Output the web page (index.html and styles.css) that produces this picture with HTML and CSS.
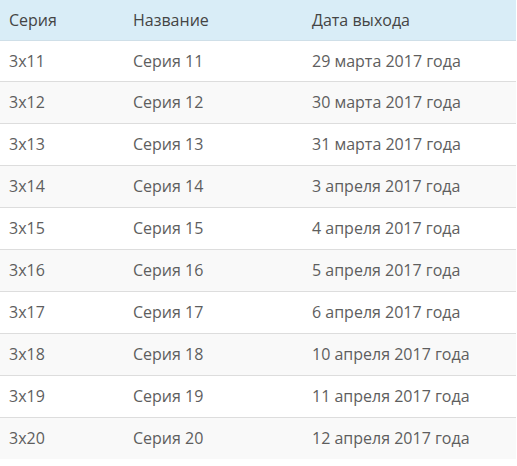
FILE: index.html
```html
<!DOCTYPE html>
<html lang="ru">
<head>
<meta charset="utf-8">
<link rel="stylesheet" href="styles.css">
</head>
<body>
<table class="episodes">
  <colgroup>
    <col class="c1"><col class="c2"><col class="c3">
  </colgroup>
  <thead>
    <tr><th>Серия</th><th>Название</th><th>Дата выхода</th></tr>
  </thead>
  <tbody>
    <tr><td>3x11</td><td>Серия 11</td><td>29 марта 2017 года</td></tr>
    <tr><td>3x12</td><td>Серия 12</td><td>30 марта 2017 года</td></tr>
    <tr><td>3x13</td><td>Серия 13</td><td>31 марта 2017 года</td></tr>
    <tr><td>3x14</td><td>Серия 14</td><td>3 апреля 2017 года</td></tr>
    <tr><td>3x15</td><td>Серия 15</td><td>4 апреля 2017 года</td></tr>
    <tr><td>3x16</td><td>Серия 16</td><td>5 апреля 2017 года</td></tr>
    <tr><td>3x17</td><td>Серия 17</td><td>6 апреля 2017 года</td></tr>
    <tr><td>3x18</td><td>Серия 18</td><td>10 апреля 2017 года</td></tr>
    <tr><td>3x19</td><td>Серия 19</td><td>11 апреля 2017 года</td></tr>
    <tr><td>3x20</td><td>Серия 20</td><td>12 апреля 2017 года</td></tr>
  </tbody>
</table>
</body>
</html>
```

FILE: styles.css
```css
html, body {
  margin: 0;
  padding: 0;
  background: #fff;
}
.episodes {
  width: 516px;
  border-collapse: collapse;
  font-family: "Open Sans", "Noto Sans", sans-serif;
  font-size: 16px;
  color: #5e5e5e;
  table-layout: fixed;
}
.c1 { width: 124px; }
.c2 { width: 179px; }
.c3 { width: 213px; }
.episodes th {
  background: #d9edf7;
  font-weight: 400;
  color: #444;
  text-align: left;
  height: 40px;
  padding: 0 9px;
  border-bottom: 1px solid #cfdfe8;
  box-sizing: border-box;
}
.episodes td {
  height: 42px;
  padding: 0 9px;
  border-top: 1px solid #ddd;
  box-sizing: border-box;
}
.episodes tbody tr:first-child td { border-top: none; height: 41px; }
.episodes tbody tr:nth-child(even) td { background: #f9f9f9; }
```
